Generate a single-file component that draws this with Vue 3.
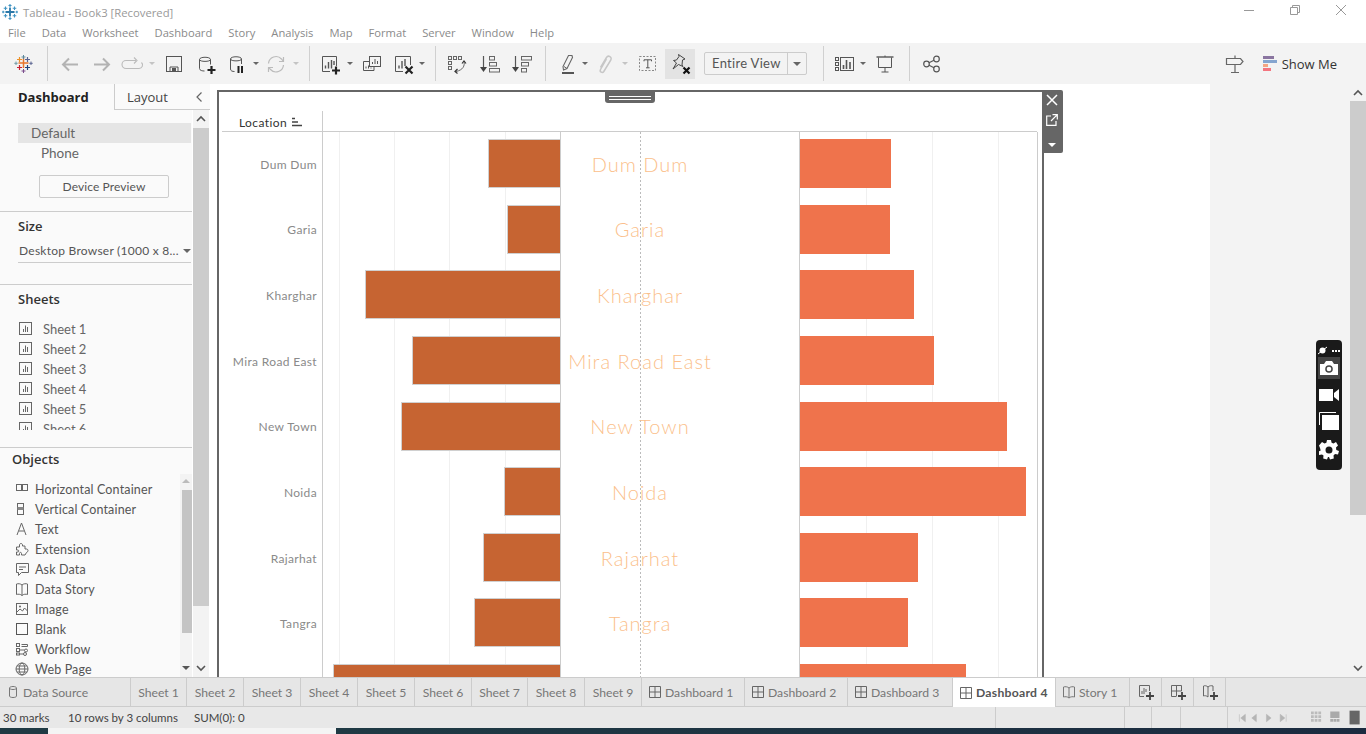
<script setup>
const menus = ['File', 'Data', 'Worksheet', 'Dashboard', 'Story', 'Analysis', 'Map', 'Format', 'Server', 'Window', 'Help']

// toolbar slots, w is chosen so that every icon lands on its column
const tools = [
  { i: 'logo', w: 32 }, { sep: 1, w: 14 },
  { i: 'back', w: 32 }, { i: 'fwd', w: 32 }, { i: 'redo', w: 28 }, { caret: 'off', w: 12 },
  { i: 'save', w: 32 }, { i: 'dbadd', w: 32 }, { i: 'dbpause', w: 28 }, { caret: 'on', w: 12 },
  { i: 'refresh', w: 28 }, { caret: 'off', w: 12 }, { sep: 1, w: 14 },
  { i: 'newsheet', w: 30 }, { caret: 'on', w: 8 }, { i: 'dup', w: 36 }, { i: 'clear', w: 26 }, { caret: 'on', w: 12 }, { sep: 1, w: 14 },
  { i: 'swap', w: 30 }, { i: 'sortasc', w: 36 }, { i: 'sortdesc', w: 28 }, { sep: 1, w: 18 },
  { i: 'pen', w: 28 }, { caret: 'on', w: 6 }, { i: 'clip', w: 34 }, { caret: 'off', w: 6 }, { w: 3 }, { i: 'textbox', w: 34 },
]
const tools2 = [
  { sep: 1, w: 32 }, { i: 'showme', w: 12 }, { caret: 'on', w: 24 }, { i: 'present', w: 20 }, { sep: 1, w: 28 }, { i: 'share', w: 18 },
]

const sheets = ['Sheet 1', 'Sheet 2', 'Sheet 3', 'Sheet 4', 'Sheet 5', 'Sheet 6']
const objects = [
  ['ohc', 'Horizontal Container'], ['ovc', 'Vertical Container'], ['otx', 'Text'], ['oex', 'Extension'], ['oask', 'Ask Data'],
  ['ostory', 'Data Story'], ['oimg', 'Image'], ['oblank', 'Blank'], ['oflow', 'Workflow'], ['oweb', 'Web Page'],
]

// left = length of the pane 1 bar, right = length of the pane 3 bar
// the last row is cut by the window, its label is below the fold
const rows = [
  { name: 'Dum Dum', left: 72, right: 91 },
  { name: 'Garia', left: 53, right: 90 },
  { name: 'Kharghar', left: 195, right: 114 },
  { name: 'Mira Road East', left: 148, right: 134 },
  { name: 'New Town', left: 159, right: 207 },
  { name: 'Noida', left: 56, right: 226 },
  { name: 'Rajarhat', left: 77, right: 118 },
  { name: 'Tangra', left: 86, right: 108 },
  { name: '', left: 227, right: 166 },
]

const tabs = [
  { t: 'Data Source', w: 131, i: 'tdb' },
  { t: 'Sheet 1', w: 56 }, { t: 'Sheet 2', w: 57 }, { t: 'Sheet 3', w: 57 }, { t: 'Sheet 4', w: 57 }, { t: 'Sheet 5', w: 57 },
  { t: 'Sheet 6', w: 57 }, { t: 'Sheet 7', w: 56 }, { t: 'Sheet 8', w: 57 }, { t: 'Sheet 9', w: 57 },
  { t: 'Dashboard 1', w: 103, i: 'tdash' }, { t: 'Dashboard 2', w: 103, i: 'tdash' }, { t: 'Dashboard 3', w: 105, i: 'tdash' },
  { t: 'Dashboard 4', w: 103, i: 'tdash', active: true }, { t: 'Story 1', w: 74, i: 'tstory' },
  { w: 32, i: 'tnews' }, { w: 32, i: 'tnewd' }, { w: 32, i: 'tnewst' },
]
</script>

<template>
  <div class="app">
    <svg class="defs" width="0" height="0" aria-hidden="true">
      <symbol id="i-tlogo" viewBox="0 0 16 16">
        <path d="M8 3.500v9M3.500 8h9" stroke="#2b78a8" stroke-width="1.800" fill="none" />
        <path d="M3.500 2.500v3.500M1.700 4.200h3.600M12.500 2.500v3.500M10.700 4.200h3.600M3.500 10v3.500M1.700 11.800h3.600M12.500 10v3.500M10.700 11.800h3.600M8 0v3M6.500 1.500h3M8 13v3M6.500 14.500h3M0 8h2.500M1.200 6.700v2.600M13.500 8H16M14.800 6.700v2.600" stroke="#3f93c2" stroke-width="1.100" fill="none" />
      </symbol>
      <symbol id="i-logo" viewBox="0 0 24 24">
        <g fill="none">
          <path d="M11.500 6v10M6.500 11h10" stroke="#e8762b" stroke-width="1.500" />
          <path d="M11.500 3v4M9.500 5h4" stroke="#5b879b" />
          <path d="M7.500 5v5M5 7.500h5" stroke="#eb9129" stroke-width="1.200" />
          <path d="M15.500 5v5M13 7.500h5" stroke="#5b6591" stroke-width="1.200" />
          <path d="M4 9.500v3.500M2.300 11.300h3.400" stroke="#7099a6" />
          <path d="M19 9.500v3.500M17.300 11.300h3.400" stroke="#5b6591" />
          <path d="M7.500 13v5M5 15.500h5" stroke="#c72035" stroke-width="1.200" />
          <path d="M15.500 13v5M13 15.500h5" stroke="#1f447a" stroke-width="1.200" />
          <path d="M11.500 17v4M9.500 19h4" stroke="#7b4d8c" />
        </g>
      </symbol>
      <symbol id="i-back" viewBox="0 0 24 24"><path d="M20 12.500H5M11 6.500l-6 6 6 6" fill="none" stroke="#b3b3b3" stroke-width="2" /></symbol>
      <symbol id="i-fwd" viewBox="0 0 24 24"><path d="M4 12.500h15M13 6.500l6 6-6 6" fill="none" stroke="#b3b3b3" stroke-width="2" /></symbol>
      <symbol id="i-redo" viewBox="0 0 24 24"><path d="M16 8.500H6a3.500 3.500 0 0 0 0 8h13a3.500 3.500 0 0 0 2.500-6M14 5.500l3 3-3 3" fill="none" stroke="#bbb" stroke-width="1.100" /></symbol>
      <symbol id="i-save" viewBox="0 0 24 24">
        <rect x="4.500" y="4.500" width="15" height="15" fill="none" stroke="#555" />
        <path d="M8 20v-5h8v5" fill="none" stroke="#555" /><rect x="10" y="16" width="4" height="3.500" fill="#555" />
      </symbol>
      <symbol id="i-dbadd" viewBox="0 0 24 24">
        <path d="M5.500 7.500c0-3 11-3 11 0v5M5.500 7.500c0 2.500 11 2.500 11 0M5.500 7.500v9c0 2 3 2.500 5 2.500" fill="none" stroke="#555" />
        <path d="M17.500 14v8M13.500 18h8" stroke="#222" stroke-width="2.200" />
      </symbol>
      <symbol id="i-dbpause" viewBox="0 0 24 24">
        <path d="M6.500 7c0-3 11-3 11 0v5M6.500 7c0 2.500 11 2.500 11 0M6.500 7v10c0 2 2 2.500 4 2.500" fill="none" stroke="#555" />
        <path d="M14.500 14v7M18 14v7" stroke="#222" stroke-width="2" />
      </symbol>
      <symbol id="i-refresh" viewBox="0 0 24 24">
        <path d="M4.500 11.500a7.500 7.500 0 0 1 13-4.500l1.500 2M19.500 13a7.500 7.500 0 0 1-13 4.500L5 15.500M19.500 5v4.500H15M4.500 20v-4.500H9" fill="none" stroke="#bbb" stroke-width="1.200" />
      </symbol>
      <symbol id="i-newsheet" viewBox="0 0 24 24">
        <path d="M17.500 14V4.500h-14v15H11" fill="none" stroke="#555" />
        <path d="M6.500 16.500v-3M9.500 16.500V10M12.500 16.500V8M15 13V9" stroke="#555" stroke-width="1.400" />
        <path d="M17 14.500v8M13 18.500h8" stroke="#222" stroke-width="2.200" />
      </symbol>
      <symbol id="i-dup" viewBox="0 0 24 24">
        <rect x="9.500" y="4.500" width="11" height="10" fill="#f3f3f3" stroke="#555" />
        <path d="M12.500 12v-2M15 12V7M17.500 12V9" stroke="#555" />
        <path d="M9 9.500H3.500v9H14v-3.500" fill="none" stroke="#555" />
        <path d="M6 16.500v-2M8.500 16.500v-3M11 16.500v-1" stroke="#555" />
      </symbol>
      <symbol id="i-clear" viewBox="0 0 24 24">
        <path d="M19.500 13V4.500h-15v15H12" fill="none" stroke="#555" />
        <path d="M8 16.500v-3M11 16.500V9M14 14V7" stroke="#555" stroke-width="1.400" />
        <path d="M14.500 14.500l7 7M21.500 14.500l-7 7" stroke="#222" stroke-width="2.200" />
      </symbol>
      <symbol id="i-swap" viewBox="0 0 24 24">
        <g fill="none" stroke="#666"><rect x="3.500" y="4.500" width="3" height="3" /><rect x="8.500" y="4.500" width="3" height="3" /><rect x="13.500" y="4.500" width="3" height="3" /><rect x="3.500" y="9.500" width="3" height="3" /><rect x="3.500" y="14.500" width="3" height="3" />
          <path d="M19 9c1 5-1 9-8 10.500" /></g>
        <path d="M17 11.500l2-2.500 2 2.500M12.500 17l-2.500 2.500 2.500 2" fill="none" stroke="#333" stroke-width="1.200" />
      </symbol>
      <symbol id="i-sortasc" viewBox="0 0 24 24">
        <path d="M5.500 4v12" stroke="#555" stroke-width="1.200" /><path d="M2 15h7l-3.500 5z" fill="#444" />
        <rect x="11.500" y="4.500" width="5" height="3.500" fill="none" stroke="#666" /><rect x="11.500" y="10.500" width="7" height="3.500" fill="none" stroke="#666" /><rect x="11.500" y="16.500" width="10" height="3.500" fill="none" stroke="#666" />
      </symbol>
      <symbol id="i-sortdesc" viewBox="0 0 24 24">
        <path d="M5.500 4v12" stroke="#555" stroke-width="1.200" /><path d="M2 15h7l-3.500 5z" fill="#444" />
        <rect x="11.500" y="4.500" width="10" height="3.500" fill="none" stroke="#666" /><rect x="11.500" y="10.500" width="7" height="3.500" fill="none" stroke="#666" /><rect x="11.500" y="16.500" width="5" height="3.500" fill="none" stroke="#666" />
      </symbol>
      <symbol id="i-pen" viewBox="0 0 24 24">
        <path d="M12.500 3.500h3.500l.5 2-5.500 11-3.500 1.500-.5-3.500z" fill="none" stroke="#666" stroke-width="1.100" />
        <path d="M8 14.500l3 2" stroke="#666" />
        <rect x="6" y="20" width="12" height="2" fill="#555" />
      </symbol>
      <symbol id="i-clip" viewBox="0 0 24 24">
        <path d="M7.500 15.500l6-10c1.700-2.800 6-.5 4.300 2.500l-7 11.500c-1.300 2-4.500 .5-3.300-2l6-10.500" fill="none" stroke="#c6c6c6" stroke-width="1.500" />
      </symbol>
      <symbol id="i-textbox" viewBox="0 0 24 24">
        <rect x="3.500" y="4.500" width="16" height="14" fill="none" stroke="#888" stroke-dasharray="2 1.500" />
        <path d="M8 9.300V7.800h7.500v1.500M11.800 7.800v8M10 15.800h3.600" fill="none" stroke="#555" />
      </symbol>
      <symbol id="i-pin" viewBox="0 0 24 24">
        <path d="M10.500 2.500l6.500 4.500-2.500 1-.5 5 1 1.500-4.500-2-5.500 4.500 3.500-6-3-2.500 3-.5 2.500-3.500z" fill="none" stroke="#444" />
        <path d="M15.500 15.500l6 6M21.500 15.500l-6 6" stroke="#111" stroke-width="2.200" />
      </symbol>
      <symbol id="i-showme" viewBox="0 0 24 24">
        <g fill="none" stroke="#555"><rect x="2.500" y="5.500" width="3" height="3" /><rect x="2.500" y="10.500" width="3" height="3" /><rect x="2.500" y="15.500" width="3" height="3" /><rect x="7.500" y="5.500" width="13" height="13" /></g>
        <path d="M10.500 17v-4M13.500 17V8M17 17v-7" stroke="#555" stroke-width="1.600" />
      </symbol>
      <symbol id="i-present" viewBox="0 0 24 24">
        <path d="M3.500 5h17" stroke="#555" stroke-width="1.400" /><path d="M5.500 5.500v10h13v-10M12 15.500V20M8.500 20h7M12 3.500V5" fill="none" stroke="#555" />
      </symbol>
      <symbol id="i-share" viewBox="0 0 24 24">
        <g fill="none" stroke="#555" stroke-width="1.200"><circle cx="6.500" cy="12" r="2.800" /><circle cx="16.500" cy="7" r="2.800" /><circle cx="16.500" cy="17" r="2.800" /><path d="M9 10.700l5-2.500M9 13.300l5 2.500" /></g>
      </symbol>
      <symbol id="i-guide" viewBox="0 0 24 24">
        <path d="M3.500 6.500h14l2.500 3-2.500 3h-14zM12 3.500v3M12 12.500V20M8 20.500h8" fill="none" stroke="#666" stroke-width="1.200" />
      </symbol>
      <symbol id="i-sheet" viewBox="0 0 16 16">
        <rect x=".5" y="1.500" width="12" height="12" fill="none" stroke="#666" />
        <path d="M4.500 11V8M6.500 11V4.500M8.500 11V6" stroke="#666" />
      </symbol>
      <symbol id="i-ohc" viewBox="0 0 16 16"><g fill="none" stroke="#666"><rect x="2.500" y="3.500" width="5" height="6" /><rect x="8.500" y="3.500" width="5" height="6" /></g></symbol>
      <symbol id="i-ovc" viewBox="0 0 16 16"><g fill="none" stroke="#666"><rect x="3.500" y="2.500" width="6" height="5" /><rect x="3.500" y="8.500" width="6" height="5" /></g><rect x="3.500" y="6" width="6" height="3" fill="#888" /></symbol>
      <symbol id="i-otx" viewBox="0 0 16 16"><path d="M3 14L7.500 2 12 14M5 10h5" fill="none" stroke="#666" /></symbol>
      <symbol id="i-oex" viewBox="0 0 16 16"><path d="M2.500 6h3V4c0-2 3-2 3 0v1H11v3h1.500c2 0 2 3 0 3.500L11 14H7.500v-1.500c0-1.500-2-1.500-2 0V14h-3v-3h1.500c1 0 1-2 0-2H2.500z" fill="none" stroke="#666" /></symbol>
      <symbol id="i-oask" viewBox="0 0 16 16"><path d="M2.500 2.500h12v9h-7l-3 3v-3h-2z" fill="none" stroke="#666" /><path d="M5 6h7M5 8.500h4" stroke="#666" /></symbol>
      <symbol id="i-ostory" viewBox="0 0 16 16"><path d="M8 4C6.500 2.500 4 2.500 2.500 3v10.500c1.500-.5 4-.5 5.500 1 1.500-1.500 4-1.500 5.500-1V3C12 2.500 9.500 2.500 8 4zM8 4v10.500" fill="none" stroke="#666" /></symbol>
      <symbol id="i-oimg" viewBox="0 0 16 16"><rect x="2.500" y="2.500" width="11" height="11" fill="none" stroke="#666" /><path d="M3 11l3-3 2.500 2 2-3 3 3" fill="none" stroke="#666" /><circle cx="6" cy="5.500" r="1" fill="#666" /></symbol>
      <symbol id="i-oblank" viewBox="0 0 16 16"><rect x="2.500" y="2.500" width="11" height="11" fill="none" stroke="#555" /></symbol>
      <symbol id="i-oflow" viewBox="0 0 16 16"><g fill="none" stroke="#666"><rect x="2.500" y="2.500" width="3" height="3" /><path d="M7.500 3.500h6v2h-6" /><rect x="2.500" y="7.500" width="3" height="3" /><circle cx="12" cy="9.500" r="1.500" /><rect x="2.500" y="12" width="3" height="2" /><circle cx="11" cy="13" r="1.500" /><path d="M5.500 9h5M5.500 13h4" /></g></symbol>
      <symbol id="i-oweb" viewBox="0 0 16 16"><g fill="none" stroke="#666"><circle cx="8" cy="8" r="6" /><ellipse cx="8" cy="8" rx="2.800" ry="6" /><path d="M2 8h12M3 5h10M3 11h10" /></g></symbol>
      <symbol id="i-tdb" viewBox="0 0 14 14"><path d="M3.500 3c0-2 7-2 7 0v8c0 2-7 2-7 0zM3.500 3c0 2 7 2 7 0" fill="none" stroke="#777" /></symbol>
      <symbol id="i-tdash" viewBox="0 0 14 14"><path d="M1.500 1.500h11v11h-11zM7 1.500v11M1.500 7h11" fill="none" stroke="#666" /></symbol>
      <symbol id="i-tstory" viewBox="0 0 14 14"><path d="M7 3C5.500 1.500 3 1.500 1.500 2v10c1.500-.5 4-.5 5.500 1 1.500-1.500 4-1.500 5.500-1V2C11 1.500 8.500 1.500 7 3zM7 3v10" fill="none" stroke="#777" /></symbol>
      <symbol id="i-tnews" viewBox="0 0 18 18">
        <path d="M12.500 8V2.500h-10v11H7" fill="none" stroke="#666" /><path d="M5 11V8M7 11V5M9 9V6" stroke="#666" /><path d="M13 9v8M9 13h8" stroke="#444" stroke-width="1.800" />
      </symbol>
      <symbol id="i-tnewd" viewBox="0 0 18 18">
        <path d="M12.500 8V2.500h-10v11H7M7.500 2.500v11M2.500 8h10" fill="none" stroke="#666" /><path d="M13 9v8M9 13h8" stroke="#444" stroke-width="1.800" />
      </symbol>
      <symbol id="i-tnewst" viewBox="0 0 18 18">
        <path d="M7 4C5.500 2.500 3.500 2.500 2.500 3v10c1-.5 3-.5 4.500 1M7 4c1.500-1.500 3.500-1.500 5-1v5M7 4v10" fill="none" stroke="#666" /><path d="M13 9v8M9 13h8" stroke="#444" stroke-width="1.800" />
      </symbol>
    </svg>

    <header class="titlebar">
      <svg class="title-logo" width="16" height="16"><use href="#i-tlogo" /></svg>
      <span class="title-text">Tableau - Book3 [Recovered]</span>
      <div class="winctl">
        <svg width="12" height="12" viewBox="0 0 12 12"><path d="M1 6.500h10" stroke="#999" /></svg>
        <svg width="12" height="12" viewBox="0 0 12 12"><path d="M3.500 3V1.500h7v7H9M1.500 3.500h7v7h-7z" fill="none" stroke="#999" /></svg>
        <svg width="12" height="12" viewBox="0 0 12 12"><path d="M1 1l10 10M11 1L1 11" stroke="#999" /></svg>
      </div>
    </header>

    <nav class="menubar">
      <span v-for="m in menus" :key="m">{{ m }}</span>
    </nav>

    <div class="toolbar">
      <template v-for="(t, n) in tools" :key="n">
        <div class="slot" :style="{ width: t.w + 'px' }">
          <svg v-if="t.i" class="ic" width="24" height="24"><use :href="'#i-' + t.i" /></svg>
          <i v-else-if="t.sep" class="sep"></i>
          <i v-else-if="t.caret" class="caret" :class="t.caret"></i>
        </div>
      </template>
      <div class="slot pinned"><svg class="ic" width="24" height="24"><use href="#i-pin" /></svg></div>
      <div class="fit">
        <span class="fit-label">Entire View</span>
        <span class="fit-drop"><i class="caret on"></i></span>
      </div>
      <template v-for="(t, n) in tools2" :key="n">
        <div class="slot" :style="{ width: t.w + 'px' }">
          <svg v-if="t.i" class="ic" width="24" height="24"><use :href="'#i-' + t.i" /></svg>
          <i v-else-if="t.sep" class="sep"></i>
          <i v-else-if="t.caret" class="caret" :class="t.caret"></i>
        </div>
      </template>
      <div class="tool-right">
        <svg class="ic" width="24" height="24"><use href="#i-guide" /></svg>
        <div class="showme">
          <span class="sm-bars"><i class="b1"></i><i class="b2"></i><i class="b3"></i><i class="b4"></i></span>
          <span>Show Me</span>
        </div>
      </div>
    </div>

    <main class="main">
      <aside class="side">
        <div class="side-tabs">
          <div class="stab active">Dashboard</div>
          <div class="stab layout">Layout</div>
          <div class="stab chev">
            <svg width="10" height="12" viewBox="0 0 10 12"><path d="M7.500 1.500L3 6l4.500 4.500" fill="none" stroke="#666" stroke-width="1.200" /></svg>
          </div>
        </div>
        <div class="side-body">
          <div class="panel">
            <section class="sec sec-device">
              <div class="dev-row selected">Default</div>
              <div class="dev-row phone">Phone</div>
              <button class="dev-btn" type="button">Device Preview</button>
            </section>
            <section class="sec sec-size">
              <h3>Size</h3>
              <div class="size-drop"><span>Desktop Browser (1000 x 8...</span><i class="caret on"></i></div>
            </section>
            <section class="sec sec-sheets">
              <h3>Sheets</h3>
              <ul class="sheet-list">
                <li v-for="s in sheets" :key="s">
                  <svg width="16" height="16"><use href="#i-sheet" /></svg>{{ s }}
                </li>
              </ul>
            </section>
            <section class="sec sec-objects">
              <h3>Objects</h3>
              <div class="obj-wrap">
                <ul class="obj-list">
                  <li v-for="o in objects" :key="o[1]">
                    <svg width="16" height="16"><use :href="'#i-' + o[0]" /></svg>{{ o[1] }}
                  </li>
                </ul>
                <div class="obj-scroll">
                  <i class="tri up"></i>
                  <div class="obj-thumb"></div>
                  <i class="tri down"></i>
                </div>
              </div>
            </section>
          </div>
          <div class="side-scroll">
            <div class="sb-btn">
              <svg width="10" height="8" viewBox="0 0 10 8"><path d="M1 6l4-4 4 4" fill="none" stroke="#555" stroke-width="1.600" /></svg>
            </div>
            <div class="sb-thumb"></div>
            <div class="sb-btn bottom">
              <svg width="10" height="8" viewBox="0 0 10 8"><path d="M1 2l4 4 4-4" fill="none" stroke="#555" stroke-width="1.600" /></svg>
            </div>
          </div>
        </div>
      </aside>

      <div class="canvas">
        <div class="frame">
          <div class="handle"><i></i><i></i></div>
          <div class="head-row">
            <div class="head-cell">
              <span>Location</span>
              <svg width="12" height="10" viewBox="0 0 12 10"><path d="M1 1.500h3M1 5h6M1 8.500h10" stroke="#444" stroke-width="1.400" /></svg>
            </div>
          </div>
          <div class="chart-body">
            <div class="col names">
              <div v-for="(r, n) in rows" :key="n" class="row name">{{ r.name }}</div>
            </div>
            <div class="col pane-left">
              <div v-for="(r, n) in rows" :key="n" class="row">
                <div class="bar bar-l" :style="{ width: r.left + 'px' }"></div>
              </div>
            </div>
            <div class="col pane-mid">
              <div v-for="(r, n) in rows" :key="n" class="row mid-label">{{ r.name }}</div>
            </div>
            <div class="col pane-right">
              <div v-for="(r, n) in rows" :key="n" class="row">
                <div class="bar bar-r" :style="{ width: r.right + 'px' }"></div>
              </div>
            </div>
          </div>
        </div>
        <div class="frame-tools">
          <svg width="12" height="12" viewBox="0 0 12 12"><path d="M1 1l10 10M11 1L1 11" stroke="#fff" stroke-width="1.500" /></svg>
          <svg width="12" height="12" viewBox="0 0 12 12"><path d="M5 2H.7v9.300H10V7M6.500 .7h4.800v4.800M11.300 .7L5 7" fill="none" stroke="#fff" stroke-width="1.200" /></svg>
          <i class="tool-tri"></i>
        </div>
      </div>

      <div class="gutter"></div>

      <div class="main-scroll">
        <div class="sb-btn main-btn">
          <svg width="10" height="8" viewBox="0 0 10 8"><path d="M1 6l4-4 4 4" fill="none" stroke="#555" stroke-width="1.600" /></svg>
        </div>
        <div class="main-thumb"></div>
        <div class="sb-btn bottom">
          <svg width="10" height="8" viewBox="0 0 10 8"><path d="M1 2l4 4 4-4" fill="none" stroke="#555" stroke-width="1.600" /></svg>
        </div>
      </div>
    </main>

    <div class="tabs">
      <div
        v-for="t in tabs"
        :key="t.t || t.i"
        class="tab"
        :class="{ active: t.active, 'with-icon': t.i && t.t }"
        :style="{ width: t.w + 'px' }"
      >
        <svg v-if="t.i" :width="t.t ? 14 : 18" :height="t.t ? 14 : 18"><use :href="'#i-' + t.i" /></svg>
        <span v-if="t.t">{{ t.t }}</span>
      </div>
    </div>

    <footer class="status">
      <span class="st-a">30 marks</span>
      <span class="st-b">10 rows by 3 columns</span>
      <span>SUM(0): 0</span>
      <div class="st-cells">
        <i style="width: 128px"></i><i style="width: 26px"></i><i style="width: 28px"></i><i style="width: 46px"></i>
        <div class="st-nav">
          <svg width="62" height="10" viewBox="0 0 62 10">
            <path d="M1.500 1v8M8 1L3 5l5 4zM20 1l-5 4 5 4zM31 1l5 4-5 4zM46 1l5 4-5 4zM52.500 1v8" fill="#b5b5b5" stroke="#b5b5b5" stroke-width=".6" />
          </svg>
          <svg width="60" height="16" viewBox="0 0 60 16">
            <path d="M0 1h3v3H0zM4 1h3v3H4zM8 1h3v3H8zM0 5h3v3H0zM4 5h3v3H4zM8 5h3v3H8zM0 9h3v3H0zM4 9h3v3H4zM8 9h3v3H8z" fill="#bbb" />
            <path d="M21 1h10v7H21zM21 9h3v3h-3zM24.500 9h3v3h-3zM28 9h3v3h-3z" fill="#aaa" />
            <rect x="42" y="0" width="11" height="15" fill="#666" />
          </svg>
        </div>
      </div>
    </footer>
    <div class="taskbar"></div>

    <div class="recorder">
      <div class="rec-top">
        <svg width="9" height="9" viewBox="0 0 9 9"><circle cx="4.500" cy="4.500" r="3" fill="#fff" /><path d="M0 8L9 1" stroke="#fff" /></svg>
        <span class="rec-dots"><i></i><i></i><i></i></span>
      </div>
      <div class="rec-cam">
        <svg width="20" height="16" viewBox="0 0 20 16">
          <path fill="#fff" d="M1 4h4l2-3h6l2 3h4v11H1z" /><circle cx="10" cy="9" r="3.800" fill="#444" /><circle cx="10" cy="9" r="2.300" fill="#fff" />
        </svg>
      </div>
      <svg width="20" height="14" viewBox="0 0 20 14"><rect x="0" y="1" width="14" height="12" fill="#fff" /><path d="M15 5l5-4v12l-5-4z" fill="#fff" /></svg>
      <svg width="20" height="18" viewBox="0 0 20 18"><path d="M.5 13V.5H17" fill="none" stroke="#fff" /><rect x="3" y="3" width="17" height="15" fill="#fff" /></svg>
      <svg width="20" height="20" viewBox="0 0 20 20">
        <path fill="#fff" fill-rule="evenodd" d="M8 0h4l.6 2.800 1.900.8L17 2l2 3.500-2 2 .3 2.500 2.700 1-1 3.500-3-.4-1.500 1.500.3 3-3.800 1-1-2.700H9l-1 2.700-3.800-1 .3-3L3 14.600l-3 .4-1-3.500 2.700-1L1 8 .8 7.500l-.8-2L3 2l2.500 1.600 1.900-.8zM10 6.500a3.500 3.500 0 1 0 0 7 3.500 3.500 0 0 0 0-7z" />
      </svg>
    </div>
  </div>
</template>

<style scoped>
.app {
  position: relative;
  width: 1366px;
  height: 734px;
  display: flex;
  flex-direction: column;
  overflow: hidden;
  background: #fff;
  font-family: Lato, "Open Sans", sans-serif;
}
.defs { position: absolute; }

.titlebar {
  height: 26px;
  display: flex;
  align-items: center;
  padding-left: 2px;
  flex: none;
}
.title-logo { margin-top: -2px; }
.title-text { margin-left: 5px; font: 11.300px "Open Sans", sans-serif; color: #999; margin-top: -2px; }
.winctl { margin-left: auto; margin-top: -6px; display: flex; gap: 34px; padding-right: 19px; }

.menubar {
  height: 17px;
  padding-left: 8px;
  display: flex;
  gap: 16px;
  font: 11.200px/14px "Open Sans", sans-serif;
  color: #8a8a8a;
  flex: none;
}

.toolbar {
  height: 41px;
  flex: none;
  display: flex;
  align-items: center;
  padding-left: 8px;
  background: #f3f3f3;
}
.slot {
  height: 41px;
  display: flex;
  align-items: center;
  justify-content: center;
  flex: none;
}
.ic { flex: none; }
.sep { width: 1px; height: 35px; background: #d0d0d0; }
.caret {
  width: 0;
  height: 0;
  border-left: 3px solid transparent;
  border-right: 3px solid transparent;
  border-top: 3px solid #666;
  flex: none;
}
.caret.off { border-top-color: #c4c4c4; }
.pinned { width: 30px; height: 30px; background: #e3e3e3; }
.fit {
  margin-left: 9px;
  width: 103px;
  height: 23px;
  box-sizing: border-box;
  display: flex;
  border: 1px solid #ccc;
  border-radius: 2px;
  font-size: 13px;
  line-height: 20px;
  color: #555;
  flex: none;
}
.fit-label { flex: 1; padding-left: 7px; letter-spacing: .3px; }
.fit-drop { width: 18px; border-left: 1px solid #ccc; display: flex; align-items: center; justify-content: center; }
.fit-drop .caret { border-left-width: 4px; border-right-width: 4px; border-top-width: 4px; }
.tool-right { margin-left: auto; padding-right: 29px; display: flex; align-items: center; gap: 16px; }
.showme { display: flex; align-items: center; gap: 5px; font: 13px "Open Sans", sans-serif; color: #333; }
.sm-bars { display: flex; flex-direction: column; gap: 1px; width: 14px; }
.sm-bars i { display: block; height: 3px; }
.b1 { width: 11px; background: #8a75a0; }
.b2 { width: 14px; background: #85a5cf; }
.b3 { width: 5px; background: #f4a582; }
.b4 { width: 8px; background: #f4757f; }

.main { height: 593px; display: flex; flex: none; }

.side { width: 210px; flex: none; display: flex; flex-direction: column; background: #fff; }
.side-tabs { height: 26px; display: flex; flex: none; }
.stab { font: 13px/26px "Open Sans", sans-serif; color: #444; }
.stab.active { width: 114px; padding-left: 18px; box-sizing: border-box; font-weight: 700; color: #222; background: #fafafa; }
.stab.layout {
  width: 78px;
  box-sizing: border-box;
  padding-left: 12px;
  border-left: 1px solid #ccc;
  border-bottom: 1px solid #ccc;
  background: #fafafa;
}
.stab.chev { width: 14px; padding-right: 4px; display: flex; align-items: center; justify-content: center; border-bottom: 1px solid #ccc; background: #fafafa; }

.side-body { flex: 1; display: flex; min-height: 0; }
.panel { width: 192px; margin-right: 1px; background: #fafafa; flex: none; }
.sec { border-bottom: 1px solid #ccc; box-sizing: border-box; }
.sec h3 { margin: 0; font: 600 13px/18px "Open Sans", sans-serif; color: #333; }
.sec-device { height: 102px; padding-top: 13px; }
.dev-row { height: 20px; margin-left: 18px; font-size: 13.500px; line-height: 20px; color: #666; }
.dev-row.selected { margin-right: 1px; padding-left: 13px; background: #e5e5e5; }
.dev-row.phone { padding-left: 23px; }
.dev-btn {
  display: block;
  margin: 12px 0 0 39px;
  width: 130px;
  height: 23px;
  border: 1px solid #ccc;
  border-radius: 2px;
  background: #fafafa;
  padding: 0;
  font: 12px Lato, sans-serif;
  letter-spacing: .1px;
  color: #555;
}
.sec-size { height: 73px; padding: 5px 1px 0 18px; }
.size-drop {
  margin-top: 7px;
  height: 21px;
  box-sizing: border-box;
  padding: 0 0 3px 1px;
  border-bottom: 1px solid #ccc;
  display: flex;
  align-items: center;
  justify-content: space-between;
  font-size: 12px;
  letter-spacing: .25px;
  color: #555;
}
.size-drop .caret { margin-right: 0; border-left-width: 4px; border-right-width: 4px; border-top-width: 4px; }
.sec-sheets { height: 163px; padding: 5px 0 0 18px; }
.sheet-list { margin: 11px 0 0; padding: 0; list-style: none; height: 111px; overflow: hidden; }
.sheet-list li { height: 20px; display: flex; align-items: center; gap: 8px; padding-left: 1px; font-size: 13px; color: #666; }
.sec-objects { height: 229px; padding-top: 2px; border-bottom: 0; }
.sec-objects h3 { padding-left: 12px; }
.obj-wrap { margin-top: 6px; height: 203px; display: flex; }
.obj-list { flex: 1; margin: 0; padding: 5px 0 0 14px; list-style: none; overflow: hidden; }
.obj-list li { height: 20px; display: flex; align-items: center; gap: 5px; font-size: 12.500px; letter-spacing: .15px; color: #555; }
.obj-scroll { width: 12px; background: #f3f3f3; position: relative; flex: none; }
.obj-thumb { position: absolute; left: 2px; right: 0; top: 16px; height: 143px; background: #c4c4c4; }
.tri { position: absolute; left: 2px; width: 0; height: 0; border-left: 4px solid transparent; border-right: 4px solid transparent; }
.tri.up { top: 5px; border-bottom: 4px solid #bbb; }
.tri.down { bottom: 7px; border-top: 4px solid #555; }

.side-scroll { width: 16px; background: #f3f3f3; display: flex; flex-direction: column; flex: none; }
.sb-btn { height: 18px; display: flex; align-items: center; justify-content: center; flex: none; }
.sb-btn.bottom { margin-top: auto; }
.sb-thumb { height: 478px; background: #ccc; flex: none; }

.canvas { position: relative; width: 1000px; flex: none; background: #fff; overflow: hidden; padding: 6px 0 0 7px; box-sizing: border-box; }
.frame {
  position: relative;
  width: 827px;
  height: 600px;
  box-sizing: border-box;
  padding-left: 3px;
  border: 2px solid #666;
  border-bottom: 0;
}
.handle {
  position: absolute;
  left: 386px;
  top: 0;
  width: 50px;
  height: 11px;
  box-sizing: border-box;
  padding: 4px 4px 0;
  background: #666;
  border-radius: 0 0 3px 3px;
}
.handle i { display: block; height: 1px; margin-bottom: 2px; background: #fff; }
.head-row { height: 40px; width: 815px; padding-top: 19px; box-sizing: border-box; border-bottom: 1px solid #ccc; }
.head-cell {
  width: 101px;
  height: 20px;
  box-sizing: border-box;
  padding: 2px 0 0 17px;
  border-right: 1px solid #ccc;
  display: flex;
  align-items: center;
  gap: 4px;
  font-size: 12px;
  letter-spacing: .4px;
  color: #333;
}
.chart-body { display: flex; height: 545px; overflow: hidden; }
.col { flex: none; box-sizing: border-box; border-right: 1px solid #ccc; }
.names { width: 101px; }
.pane-left {
  width: 238px;
  background:
    linear-gradient(#f0f0f0, #f0f0f0) 16px 0 / 1px 100% no-repeat,
    linear-gradient(#f0f0f0, #f0f0f0) 71px 0 / 1px 100% no-repeat,
    linear-gradient(#f0f0f0, #f0f0f0) 126px 0 / 1px 100% no-repeat,
    linear-gradient(#f0f0f0, #f0f0f0) 182px 0 / 1px 100% no-repeat;
}
.pane-mid {
  width: 239px;
  background: repeating-linear-gradient(#bbb 0 2px, transparent 2px 4px) 79px 0 / 1px 100% no-repeat;
}
.pane-right {
  width: 238px;
  background:
    linear-gradient(#f0f0f0, #f0f0f0) 66px 0 / 1px 100% no-repeat,
    linear-gradient(#f0f0f0, #f0f0f0) 132px 0 / 1px 100% no-repeat,
    linear-gradient(#f0f0f0, #f0f0f0) 198px 0 / 1px 100% no-repeat;
}
.row { height: 65.650px; box-sizing: border-box; padding-top: 7px; display: flex; }
.pane-left .row { justify-content: flex-end; }
.name {
  padding: 0 5px 1px 0;
  align-items: center;
  justify-content: flex-end;
  font-size: 12px;
  letter-spacing: .35px;
  color: #8a8a8a;
}
.mid-label {
  padding: 0 80px 2px 0;
  align-items: center;
  justify-content: center;
  font-size: 20px;
  font-weight: 300;
  letter-spacing: 1px;
  color: #fbbf8c;
  white-space: nowrap;
}
.bar { height: 49px; box-sizing: border-box; }
.bar-l { background: #c66432; border: 1px solid #d0d0d0; border-right: 0; }
.bar-r { background: #ef734c; }

.frame-tools {
  position: absolute;
  left: 834px;
  top: 6px;
  width: 19px;
  height: 63px;
  background: #666;
  border-radius: 0 2px 2px 0;
  display: flex;
  flex-direction: column;
  align-items: center;
  padding: 4px 3px 0 0;
  gap: 8px;
  box-sizing: border-box;
}
.tool-tri { margin-top: 9px; width: 0; height: 0; border-left: 4px solid transparent; border-right: 4px solid transparent; border-top: 4px solid #fff; }

.gutter { width: 140px; flex: none; background: #f3f3f3; }
.main-scroll { width: 16px; flex: none; background: #f3f3f3; display: flex; flex-direction: column; }
.main-btn { height: 17px; }
.main-thumb { height: 414px; background: #ccc; flex: none; }

.tabs {
  height: 30px;
  flex: none;
  display: flex;
  box-sizing: border-box;
  border-top: 1px solid #ccc;
  border-bottom: 1px solid #ccc;
  background: #e6e6e6;
}
.tab {
  height: 28px;
  box-sizing: border-box;
  border-right: 1px solid #ccc;
  display: flex;
  align-items: center;
  justify-content: center;
  gap: 3px;
  font-size: 12.200px;
  color: #777;
  flex: none;
}
.tab.with-icon { justify-content: flex-start; padding-left: 6px; }
.tab.active { background: #fff; font-weight: 700; letter-spacing: .25px; color: #555; height: 29px; }

.status {
  height: 21px;
  flex: none;
  display: flex;
  align-items: center;
  padding-left: 3px;
  font-size: 11.500px;
  color: #444;
  background: #e8e8e8;
}
.st-a { width: 65px; }
.st-b { width: 126px; }
.st-cells { margin-left: auto; display: flex; height: 21px; }
.st-cells > i { display: block; border-left: 1px solid #ccc; }
.st-nav { width: 139px; box-sizing: border-box; border-left: 1px solid #ccc; display: flex; align-items: center; gap: 16px; padding-left: 10px; }

.taskbar {
  height: 6px;
  flex: none;
  background: linear-gradient(90deg, #1f3a44 48px, #f4f4f4 48px 336px, #1f3a44 336px, #1b2b40 100%);
}

.recorder {
  position: absolute;
  left: 1316px;
  top: 340px;
  width: 26px;
  height: 130px;
  box-sizing: border-box;
  background: #1a1a1a;
  border-radius: 4px;
  display: flex;
  flex-direction: column;
  align-items: center;
  padding-top: 4px;
}
.rec-top { height: 13px; width: 22px; display: flex; align-items: center; justify-content: space-between; }
.rec-dots { display: flex; gap: 1px; }
.rec-dots i { width: 2px; height: 2px; background: #fff; }
.rec-cam { width: 22px; height: 22px; margin-bottom: 9px; background: #444; display: flex; align-items: center; justify-content: center; }
.recorder > svg { margin-bottom: 10px; flex: none; }
</style>

<style>
html, body { margin: 0; background: #fff; }
</style>
